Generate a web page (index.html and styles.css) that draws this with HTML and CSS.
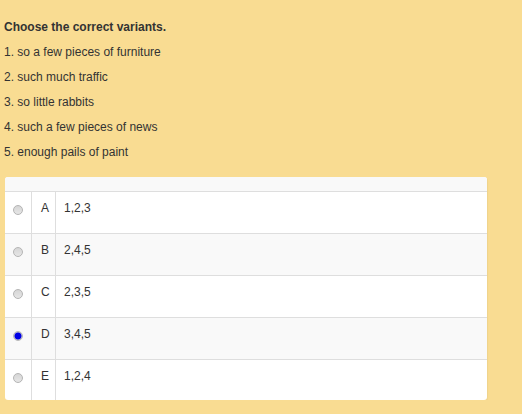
FILE: index.html
```html
<!DOCTYPE html>
<html>
  <head>
    <title>Quiz</title>
    <link rel="stylesheet" href="styles.css">
  </head>
  <body>
    <div class="question">
      <div class="title">Choose the correct variants.</div>
      <div class="line">1. so a few pieces of furniture</div>
      <div class="line">2. such much traffic</div>
      <div class="line">3. so little rabbits</div>
      <div class="line">4. such a few pieces of news</div>
      <div class="line">5. enough pails of paint</div>
    </div>
    <table class="answers">
      <colgroup>
        <col class="col-pick">
        <col class="col-letter">
        <col>
      </colgroup>
      <tr class="head"><td colspan="3"></td></tr>
      <tr>
        <td class="pick"><span class="radio"></span></td>
        <td class="letter">A</td>
        <td class="value">1,2,3</td>
      </tr>
      <tr class="alt">
        <td class="pick"><span class="radio"></span></td>
        <td class="letter">B</td>
        <td class="value">2,4,5</td>
      </tr>
      <tr>
        <td class="pick"><span class="radio"></span></td>
        <td class="letter">C</td>
        <td class="value">2,3,5</td>
      </tr>
      <tr class="alt">
        <td class="pick"><span class="radio checked"></span></td>
        <td class="letter">D</td>
        <td class="value">3,4,5</td>
      </tr>
      <tr>
        <td class="pick"><span class="radio"></span></td>
        <td class="letter">E</td>
        <td class="value">1,2,4</td>
      </tr>
    </table>
  </body>
</html>
```

FILE: styles.css
```css
html,
body {
  margin: 0;
  padding: 0;
  background: #f9dc92;
  font-family: "Liberation Sans", Arial, sans-serif;
  font-size: 12px;
  color: #333;
}

.question {
  padding: 15px 0 0 4px;
}

.line,
.title {
  line-height: 25px;
}

.title {
  font-weight: 700;
}

.answers {
  margin: 12px 0 0 5px;
  width: 482px;
  table-layout: fixed;
  border-collapse: separate;
  border-spacing: 0;
  background: #fff;
  border-radius: 3px;
  overflow: hidden;
  box-shadow: 1px 1px 1px rgba(0, 0, 0, 0.04);
}

.col-pick {
  width: 27px;
}

.col-letter {
  width: 24px;
}

.answers td {
  height: 42px;
  padding: 8px 0 0 8px;
  vertical-align: top;
  line-height: 17px;
  border-top: 1px solid #dedede;
  box-sizing: border-box;
}

.answers .head td {
  height: 14px;
  padding: 0;
  border-top: none;
  background: #f9f9f9;
}

.answers tr:last-child td {
  height: 41px;
}

.answers .alt td {
  background: #f9f9f9;
}

.answers .pick {
  padding: 13px 0 0 0;
  text-align: center;
  border-right: 1px solid #dedede;
}

.answers .letter {
  padding-left: 9px;
  border-right: 1px solid #dedede;
}

.answers .value {
  padding-left: 8px;
}

.radio {
  display: inline-block;
  width: 8px;
  height: 8px;
  border-radius: 50%;
  border: 1px solid #b4b4b4;
  background: linear-gradient(#d6d6d6, #e6e6e6);
  vertical-align: top;
}

.radio.checked {
  border-color: #b8b8b8;
  background: radial-gradient(circle, #0000e6 0, #0000e6 3px, #c8c8d8 4px);
}
```
